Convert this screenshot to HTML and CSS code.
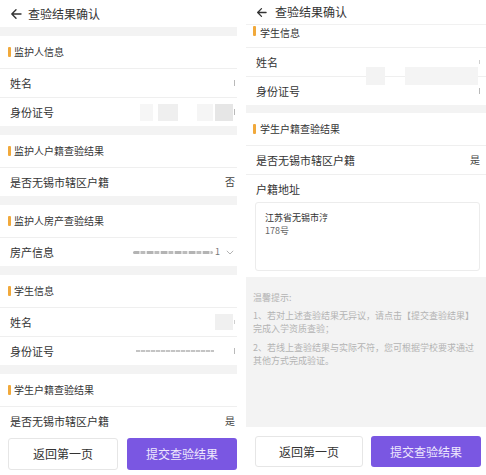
FILE: index.html
```html
<!DOCTYPE html>
<html lang="zh-CN">
<head>
<meta charset="utf-8">
<title>查验结果确认</title>
<link rel="stylesheet" href="styles.css">
</head>
<body>
<div class="screen">
  <section class="phone left">
    <header class="nav">
      <svg class="back" width="12" height="12" viewBox="0 0 12 12"><path d="M11 6H1.8M6 1.8L1.8 6L6 10.2" fill="none" stroke="#333" stroke-width="1.4" stroke-linecap="round" stroke-linejoin="round"/></svg>
      <span>查验结果确认</span>
    </header>

    <div class="group">
      <div class="sec"><i class="mark"></i>监护人信息</div>
      <div class="row"><span>姓名</span><span class="val"><i class="tick"></i></span></div>
      <div class="row"><span>身份证号</span><span class="val">
        <i class="blk b1"></i><i class="blk b2"></i><i class="blk b3"></i><i class="blk b4"></i><i class="tick"></i>
      </span></div>
    </div>

    <div class="group">
      <div class="sec"><i class="mark"></i>监护人户籍查验结果</div>
      <div class="row"><span>是否无锡市辖区户籍</span><span class="val txt">否</span></div>
    </div>

    <div class="group">
      <div class="sec"><i class="mark"></i>监护人房产查验结果</div>
      <div class="row"><span>房产信息</span><span class="val">
        <i class="smear"></i><span class="one">1</span>
        <svg class="chev" width="8" height="5" viewBox="0 0 8 5"><path d="M0.8 0.8L4 4L7.2 0.8" fill="none" stroke="#aaa" stroke-width="0.9"/></svg>
      </span></div>
    </div>

    <div class="group">
      <div class="sec"><i class="mark"></i>学生信息</div>
      <div class="row"><span>姓名</span><span class="val"><i class="blk b5"></i><i class="tick sm"></i></span></div>
      <div class="row"><span>身份证号</span><span class="val"><i class="dash"></i><i class="tick"></i></span></div>
    </div>

    <div class="group">
      <div class="sec"><i class="mark"></i>学生户籍查验结果</div>
      <div class="row"><span>是否无锡市辖区户籍</span><span class="val txt">是</span></div>
    </div>

    <div class="actions">
      <button class="btn ghost">返回第一页</button>
      <button class="btn primary">提交查验结果</button>
    </div>
  </section>

  <section class="phone right">
    <header class="nav">
      <svg class="back" width="11" height="11" viewBox="0 0 12 12"><path d="M11 6H1.8M6 1.8L1.8 6L6 10.2" fill="none" stroke="#333" stroke-width="1.4" stroke-linecap="round" stroke-linejoin="round"/></svg>
      <span>查验结果确认</span>
    </header>

    <div class="group first masked">
      <div class="sec partial"><i class="mark"></i>学生信息</div>
      <div class="row"><span>姓名</span><span class="val"><i class="tick sm"></i></span></div>
      <div class="row"><span>身份证号</span><span class="val"><i class="tick"></i></span></div>
      <i class="mask m1"></i><i class="mask m2"></i>
    </div>

    <div class="group">
      <div class="sec"><i class="mark"></i>学生户籍查验结果</div>
      <div class="row"><span>是否无锡市辖区户籍</span><span class="val txt">是</span></div>
      <div class="addr-row">
        <div class="addr-label">户籍地址</div>
        <div class="addr">
          <div>江苏省无锡市涥</div>
          <div class="cut">178号</div>
        </div>
      </div>
    </div>

    <div class="tips">
      <p class="t-title">温馨提示:</p>
      <p>1、若对上述查验结果无异议，请点击【提交查验结果】<br>完成入学资质查验；</p>
      <p>2、若线上查验结果与实际不符，您可根据学校要求通过<br>其他方式完成验证。</p>
    </div>

    <div class="actions">
      <button class="btn ghost">返回第一页</button>
      <button class="btn primary">提交查验结果</button>
    </div>
  </section>
</div>
</body>
</html>
```

FILE: styles.css
```css
html, body {
  margin: 0;
  padding: 0;
}

body {
  width: 486px;
  height: 475px;
  overflow: hidden;
  background: #fff;
  color: #333;
  font-family: "Noto Sans CJK SC", "Noto Sans", sans-serif;
}

.screen {
  display: flex;
  height: 475px;
}

.phone {
  display: flex;
  flex-direction: column;
  background: #f3f3f3;
  overflow: hidden;
  height: 475px;
}

.left {
  width: 237px;
}

.right {
  width: 240px;
  margin-left: 9px;
}

/* header */
.nav {
  flex: none;
  display: flex;
  align-items: center;
  gap: 6px;
  height: 27px;
  padding-left: 10px;
  background: #fff;
  font-size: 12px;
  line-height: 14px;
}

.right .nav {
  height: 24px;
  gap: 8px;
  border-bottom: 1px solid #f1f1f1;
}

.back {
  display: block;
}

/* groups */
.group {
  flex: none;
  position: relative;
  margin-top: 9px;
  background: #fff;
}

.right .group {
  margin-top: 8px;
}

.right .group.first {
  margin-top: 0;
}

.sec {
  display: flex;
  align-items: center;
  height: 32px;
  padding-left: 8px;
  font-size: 10px;
  line-height: 14px;
  color: #333;
}

.right .sec {
  padding-left: 7px;
}

.sec.partial {
  height: 22px;
  align-items: flex-start;
  padding-top: 1px;
  box-sizing: border-box;
}

.mark {
  width: 3px;
  height: 10px;
  margin-right: 3px;
  background: #f1a93b;
  border-radius: 1px;
}

.right .mark {
  margin-right: 4px;
}

.row {
  display: flex;
  align-items: center;
  justify-content: space-between;
  height: 29px;
  box-sizing: border-box;
  padding: 0 2px 0 10px;
  border-top: 1px solid #efefef;
  font-size: 11px;
  line-height: 14px;
}

.right .row {
  padding: 0 6px 0 10px;
}

.val {
  display: flex;
  align-items: center;
  height: 100%;
}

.val.txt {
  font-size: 10px;
  color: #444;
}

/* privacy blur remnants */
.tick {
  width: 1px;
  height: 6px;
  margin-left: 1px;
  background: #b9b9b9;
}

.tick.sm {
  height: 4px;
  background: #cfcfcf;
}

.blk {
  display: block;
  height: 17px;
}

.b1 { width: 13px; background: #f6f6f6; }
.b2 { width: 20px; margin-left: 5px; background: #efefef; }
.b3 { width: 16px; margin-left: 19px; background: #f5f5f5; }
.b4 { width: 18px; margin-left: 2px; background: #e6e6e6; }
.b5 { width: 18px; height: 16px; background: #f0f0f0; }

.smear {
  width: 80px;
  height: 3px;
  background: repeating-linear-gradient(90deg, #9a9a9a 0 6px, #cfcfcf 6px 8px, #a5a5a5 8px 12px, #e0e0e0 12px 14px);
  border-radius: 2px;
  opacity: 0.75;
}

.one {
  margin-left: 2px;
  font-size: 9px;
  color: #777;
}

.chev {
  margin-left: 6px;
  margin-right: 1px;
}

.dash {
  width: 78px;
  height: 2px;
  margin-right: 19px;
  background: repeating-linear-gradient(90deg, #b5b5b5 0 4px, #e6e6e6 4px 5px);
  opacity: 0.8;
}

.mask {
  position: absolute;
  top: 42px;
  height: 18px;
  background: #f3f3f3;
}

.m1 { left: 120px; width: 19px; }
.m2 { left: 159px; width: 73px; background: #f4f4f4; }

/* address */
.addr-row {
  border-top: 1px solid #efefef;
  padding: 7px 0 6px;
}

.addr-label {
  padding-left: 10px;
  font-size: 11px;
  line-height: 14px;
}

.addr {
  height: 69px;
  margin: 6px 6px 0 9px;
  padding: 8px 9px;
  box-sizing: border-box;
  border: 1px solid #ececec;
  border-radius: 3px;
  font-size: 9px;
  line-height: 13px;
  color: #333;
}

.addr .cut {
  color: #666;
}

/* tips */
.tips {
  flex: none;
  height: 150px;
  box-sizing: border-box;
  padding: 14px 6px 0 7px;
  font-size: 9px;
  line-height: 13px;
  color: #b3b3b3;
}

.tips p {
  margin: 0 0 6px;
}

.tips .t-title {
  margin-bottom: 5px;
}

/* bottom actions */
.actions {
  flex: 1;
  display: flex;
  gap: 9px;
  padding: 3px 0 0 8px;
  background: #fff;
}

.right .actions {
  gap: 8px;
  padding: 9px 5px 0 9px;
}

.btn {
  width: 110px;
  height: 32px;
  margin: 0;
  padding: 0;
  box-sizing: border-box;
  border-radius: 3px;
  font-family: inherit;
  font-size: 12px;
  line-height: 14px;
}

.right .btn {
  height: 31px;
}

.right .btn.ghost {
  width: 108px;
}

.ghost {
  background: #fff;
  border: 1px solid #e6e6e6;
  color: #333;
}

.primary {
  background: #7a57e2;
  border: none;
  color: #eee8fd;
}
```
